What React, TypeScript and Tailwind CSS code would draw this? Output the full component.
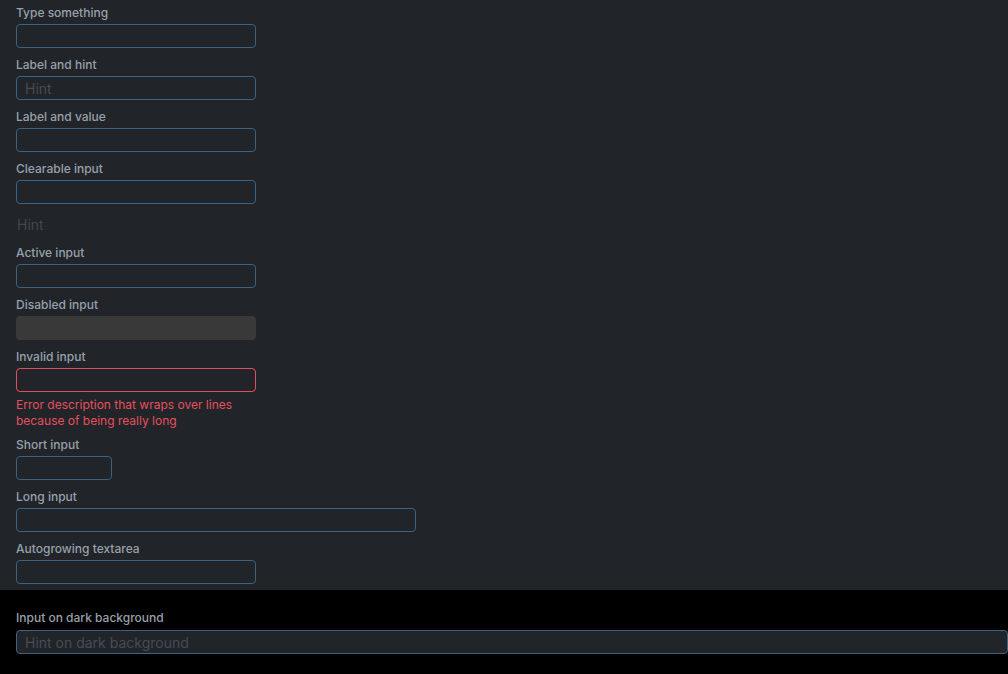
const font = { fontFamily: "Inter, 'Noto Sans', sans-serif" };

function Field({
  label,
  width = "w-[240px]",
  placeholder,
  disabled,
  invalid,
}: {
  label: string;
  width?: string;
  placeholder?: string;
  disabled?: boolean;
  invalid?: boolean;
}) {
  let box = "border-[#3d6283] bg-transparent";
  if (disabled) box = "border-transparent bg-[#393939]";
  if (invalid) box = "border-[#e0505c] bg-transparent";
  return (
    <div className="flex flex-col">
      <label className="h-4 text-[12px] leading-[18px] font-medium text-[#98a1ab]">{label}</label>
      <div className={`mt-1 h-6 ${width} rounded-[4px] border ${box} flex items-center px-2`}>
        {placeholder && <span className="text-[14px] text-[#474c53]">{placeholder}</span>}
      </div>
    </div>
  );
}

export default function App() {
  return (
    <div className="min-h-[674px] bg-[#212429] flex flex-col" style={font}>
      <div className="flex flex-col gap-2 px-4 pt-1 pb-[6px]">
        <Field label="Type something" />
        <Field label="Label and hint" placeholder="Hint" />
        <Field label="Label and value" />
        <Field label="Clearable input" />
        <div className="h-6 flex items-center pl-px text-[14px] text-[#42474e]">Hint</div>
        <Field label="Active input" />
        <Field label="Disabled input" disabled />
        <div className="flex flex-col">
          <Field label="Invalid input" invalid />
          <p className="mt-1 h-8 pt-px w-[240px] text-[12px] leading-4 text-[#e5505d]">
            Error description that wraps over lines because of being really long
          </p>
        </div>
        <Field label="Short input" width="w-[96px]" />
        <Field label="Long input" width="w-[400px]" />
        <Field label="Autogrowing textarea" />
      </div>
      <div className="flex-1 bg-black pl-4 pt-[19px] pb-5">
        <label className="block h-4 text-[12px] leading-[18px] font-medium text-[#98a1ab]">
          Input on dark background
        </label>
        <div className="mt-[5px] h-6 rounded-[4px] border border-[#3d6283] bg-[#212429] flex items-center px-2">
          <span className="text-[14px] text-[#474c53]">Hint on dark background</span>
        </div>
      </div>
    </div>
  );
}
